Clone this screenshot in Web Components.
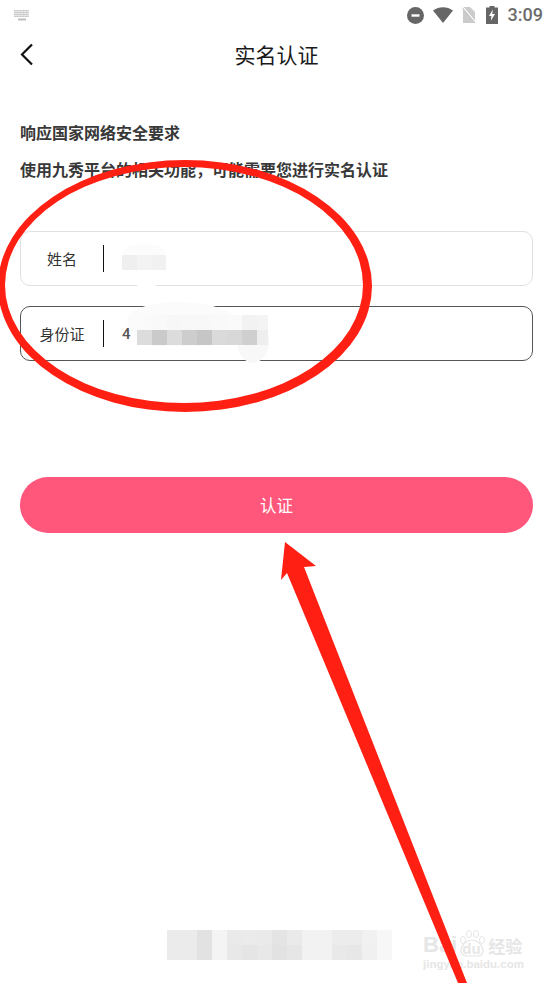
<!DOCTYPE html>
<html>
<head>
<meta charset="utf-8">
<style>
  html, body { margin: 0; padding: 0; background: #fff; }
  body { width: 553px; height: 983px; overflow: hidden; position: relative;
    font-family: "Noto Sans CJK SC", "Roboto", sans-serif; }
</style>
</head>
<body>
<status-bar></status-bar>
<nav-header>实名认证</nav-header>
<notice-text>
  <span>响应国家网络安全要求</span>
  <span>使用九秀平台的相关功能，可能需要您进行实名认证</span>
</notice-text>
<form-field label="姓名"></form-field>
<form-field label="身份证" value="4" active></form-field>
<pill-button>认证</pill-button>

<smudge-blob style="left:122px;top:243px;width:44px;height:24px;background:#fcfcfc"></smudge-blob>
<smudge-blob style="left:137px;top:282px;width:19px;height:7px;background:#fff"></smudge-blob>
<mosaic-patch style="left:122px;top:255px;width:44px" cols="3" shades="#efefef,#f3f3f3,#f1f1f1"></mosaic-patch>

<smudge-blob style="left:127px;top:302px;width:112px;height:44px;background:#fbfbfb;border-radius:45% 55% 40% 30% / 40% 50% 50% 60%"></smudge-blob>
<smudge-blob style="left:237px;top:320px;width:32px;height:43px;background:#f8f8f8"></smudge-blob>
<mosaic-patch style="left:137px;top:315px;width:131px" cols="9" shades="#fafafa,#f9f9f9,#f7f7f7,#f8f8f8,#f8f8f8,#f9f9f9,#fafafa,#f2f2f2,#f4f4f4,#dcdcdc,#cacaca,#dcdcdc,#cdcdcd,#c6c6c6,#dadada,#d8d8d8,#cfcfcf,#eeeeee"></mosaic-patch>

<mosaic-patch style="left:167px;top:930px" cols="15" shades="#ebebeb,#ebebeb,#e2e2e2,#f4f4f4,#eaeaea,#ebebeb,#eaeaea,#e4e4e4,#eaeaea,#f2f2f2,#f2f2f2,#ececec,#ececec,#f1f1f1,#f7f7f7,#ebebeb,#ebebeb,#e2e2e2,#f4f4f4,#e8e8e8,#e5e5e5,#e8e8e8,#e2e2e2,#e6e6e6,#f2f2f2,#f2f2f2,#e9e9e9,#e7e7e7,#f0f0f0,#f7f7f7"></mosaic-patch>
<baidu-mark></baidu-mark>
<red-marks></red-marks>

<script>
'use strict';

class StatusBar extends HTMLElement {
  constructor() {
    super();
    this.attachShadow({mode: 'open'}).innerHTML = `
      <style>
        :host { display: flex; align-items: center; height: 30px; padding: 0 10px 0 13px; }
        .right { margin-left: auto; display: flex; align-items: center; gap: 9px; }
        .time { font: 500 18px/30px Roboto, sans-serif; color: #6b6b6b; margin-left: 1px; }
        svg { display: block; }
      </style>
      <svg width="18" height="12" viewBox="0 0 18 12">
        <rect x="1" y="1" width="15" height="7" fill="#c4c4c4"/>
        <path d="M1 2.500h15M1 4.500h15M1 6.500h15" stroke="#f0f0f0" stroke-width=".7"/>
        <path d="M3 1v7M6 1v7M9 1v7M12 1v7M15 1v7" stroke="#eee" stroke-width=".7"/>
        <rect x="5" y="9.500" width="8" height="2" fill="#bdbdbd"/>
      </svg>
      <div class="right">
        <svg width="17" height="17" viewBox="0 0 17 17"><circle cx="8.500" cy="8.500" r="8.500" fill="#666"/><rect x="4.500" y="7.300" width="8" height="2.400" fill="#fff"/></svg>
        <svg width="20" height="16" viewBox="0 0 20 16"><path d="M0 3.500C5.800-1 14.200-1 20 3.500L10 16z" fill="#666"/></svg>
        <svg width="15" height="18" viewBox="0 0 15 18"><path d="M1 1h7l5 5v11H1z" fill="#cbcbcb"/><path d="M0 0l15 18" stroke="#fff" stroke-width="1.200"/><path d="M0 1.500l13 15.500" stroke="#bbb" stroke-width=".8"/></svg>
        <svg width="12" height="18" viewBox="0 0 12 18"><path d="M3.500 0h5v1.500H12V18H0V1.500h3.500z" fill="#666"/><path d="M6.800 3.500L3 10h2.400l-.6 4.800L9 8H6.300z" fill="#fff"/></svg>
        <span class="time">3:09</span>
      </div>`;
  }
}

class NavHeader extends HTMLElement {
  constructor() {
    super();
    this.attachShadow({mode: 'open'}).innerHTML = `
      <style>
        :host { display: flex; align-items: flex-start; justify-content: center; position: relative; height: 50px; }
        .title { font-size: 21px; color: #1a1a1a; line-height: 48px; }
        svg { position: absolute; left: 20px; top: 13px; }
      </style>
      <svg width="14" height="23" viewBox="0 0 14 23"><path d="M12 1.500L2 11.500l10 10" fill="none" stroke="#111" stroke-width="2.200"/></svg>
      <div class="title"><slot></slot></div>`;
  }
}

class NoticeText extends HTMLElement {
  constructor() {
    super();
    this.attachShadow({mode: 'open'}).innerHTML = `
      <style>
        :host { display: flex; flex-direction: column; gap: 15px; padding: 41px 20px 51px;
          font-size: 16px; line-height: 22px; font-weight: 700; color: #383838; }
        ::slotted(span) { display: block; }
      </style>
      <slot></slot>`;
  }
}

class FormField extends HTMLElement {
  constructor() {
    super();
    let label = this.getAttribute('label');
    let value = this.getAttribute('value') || '';
    this.attachShadow({mode: 'open'}).innerHTML = `
      <style>
        :host { display: flex; align-items: center; box-sizing: border-box; height: 55px;
          margin: 0 20px 20px; border: 1px solid #e0e0e0; border-radius: 10px; }
        :host([active]) { border-color: #555; }
        .label { width: 82px; text-align: center; font-size: 15px; color: #333; }
        .sep { width: 1px; height: 27px; background: #111; }
        .value { padding-left: 18px; font: 500 15px Roboto, sans-serif; color: #555; }
      </style>
      <div class="label">${label}</div>
      <div class="sep"></div>
      <div class="value">${value}</div>`;
  }
}

class PillButton extends HTMLElement {
  constructor() {
    super();
    this.attachShadow({mode: 'open'}).innerHTML = `
      <style>
        :host { display: flex; align-items: center; justify-content: center; height: 56px;
          margin: 116px 20px 0; border-radius: 28px; background: #ff577c;
          color: #fff; font-size: 16.500px; }
      </style>
      <slot></slot>`;
  }
}

// soft whitish smear left by the retouching, lies over the form
class SmudgeBlob extends HTMLElement {
  constructor() {
    super();
    this.attachShadow({mode: 'open'}).innerHTML = `
      <style>
        :host { position: absolute; display: block; border-radius: 50%; }
      </style>`;
  }
}

// pixelated cover over private data
class MosaicPatch extends HTMLElement {
  constructor() {
    super();
    let cols = +this.getAttribute('cols');
    let shades = this.getAttribute('shades').split(',');
    let cells = shades.map(c => `<i style="background:${c}"></i>`).join('');
    this.attachShadow({mode: 'open'}).innerHTML = `
      <style>
        :host { position: absolute; display: grid; overflow: hidden;
          grid-template-columns: repeat(${cols}, 15px);
          grid-auto-rows: 15px; }
        i { display: block; }
      </style>
      ${cells}`;
  }
}

class BaiduMark extends HTMLElement {
  constructor() {
    super();
    this.attachShadow({mode: 'open'}).innerHTML = `
      <style>
        :host { position: absolute; left: 423px; top: 932px; width: 100px; color: #e6e6e6; }
        .top { display: flex; align-items: flex-end; height: 25px; }
        .en { font: 700 22px/25px "Liberation Sans", sans-serif; }
        .paw { position: relative; width: 31px; height: 25px; flex: none; }
        .paw svg { position: absolute; left: 0; top: -4px; }
        .paw b { position: absolute; left: 5px; top: 8px; font: 700 15px/17px "Liberation Sans", sans-serif; }
        .cn { font: 700 17px/22px "Noto Sans CJK SC", sans-serif; }
        .url { font: 700 11.500px/13px "Liberation Sans", sans-serif; margin-top: 1px; white-space: nowrap; }
      </style>
      <div class="top"><span class="en">Bai</span>
        <span class="paw">
          <svg width="30" height="30" viewBox="0 0 30 30"><path d="M15 12c5 0 11 5 11 11 0 4-3 5-6 5H10c-3 0-6-1-6-5 0-6 6-11 11-11z" fill="none" stroke="#e6e6e6" stroke-width="1.200"/><ellipse cx="6" cy="12" rx="2.500" ry="3.500" fill="none" stroke="#e6e6e6"/><ellipse cx="12" cy="6" rx="2.500" ry="3.500" fill="none" stroke="#e6e6e6"/><ellipse cx="19" cy="6" rx="2.500" ry="3.500" fill="none" stroke="#e6e6e6"/><ellipse cx="25" cy="12" rx="2.500" ry="3.500" fill="none" stroke="#e6e6e6"/></svg>
          <b>du</b>
        </span>
        <span class="cn">经验</span></div>
      <div class="url">jingyan.baidu.com</div>`;
  }
}

// hand drawn red circle and arrow on top of the screenshot
class RedMarks extends HTMLElement {
  constructor() {
    super();
    this.attachShadow({mode: 'open'}).innerHTML = `
      <style>
        :host { position: absolute; left: 0; top: 0; pointer-events: none; }
        svg { display: block; }
      </style>
      <svg width="553" height="983" viewBox="0 0 553 983">
        <!-- two offset ellipses, the ring is thicker at the bottom like a brush stroke -->
        <path fill-rule="evenodd" fill="#ff1f13" d="M-2 286a187 126 0 1 0 374 0a187 126 0 1 0-374 0z M5 285a179 118 0 1 1 358 0a179 118 0 1 1-358 0z"/>
        <path d="M285 542L316 566 304 567 467 983 458 983 287 573 281 580z" fill="#ff1f13"/>
      </svg>`;
  }
}

customElements.define('status-bar', StatusBar);
customElements.define('nav-header', NavHeader);
customElements.define('notice-text', NoticeText);
customElements.define('form-field', FormField);
customElements.define('pill-button', PillButton);
customElements.define('smudge-blob', SmudgeBlob);
customElements.define('mosaic-patch', MosaicPatch);
customElements.define('baidu-mark', BaiduMark);
customElements.define('red-marks', RedMarks);
</script>
</body>
</html>
